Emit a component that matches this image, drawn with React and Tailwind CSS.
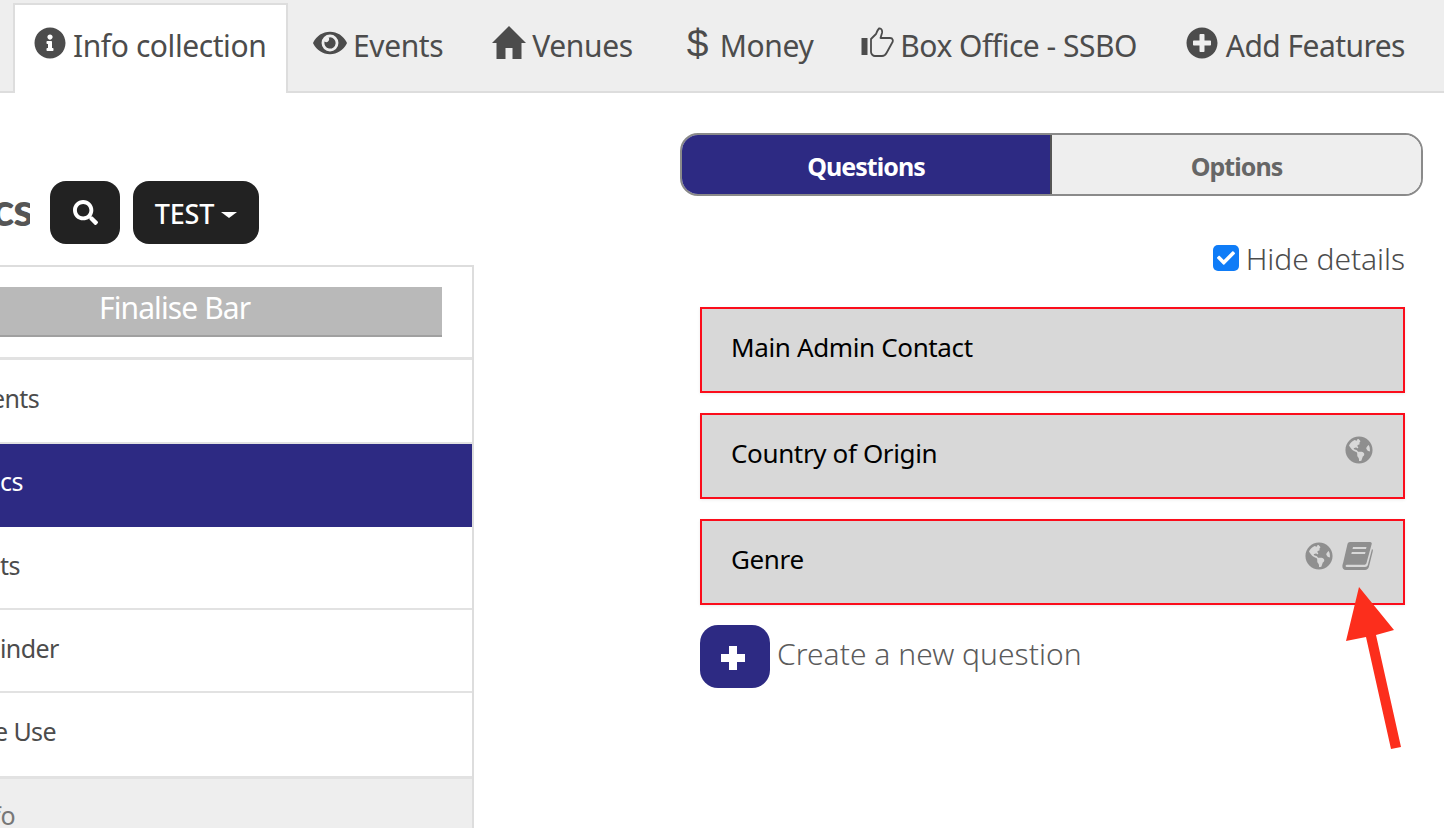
import React from "react";
import { FaInfoCircle, FaEye, FaPlusCircle, FaGlobeAmericas, FaSearch, FaCheck } from "react-icons/fa";

const font = { fontFamily: '"Noto Sans", sans-serif' };

function Tab({ icon, label, className = "" }) {
  return (
    <div className={`flex items-center h-full text-[#4c4c4c] text-[30px] whitespace-nowrap ${className}`}>
      {icon}
      <span className="mt-[2px]">{label}</span>
    </div>
  );
}

function HomeIcon() {
  return (
    <svg viewBox="0 0 34 34" className="w-[34px] h-[34px] mr-[6px] -mt-[4px]" fill="currentColor">
      <path d="M17 0 L34 17 L29.5 17 L29.5 33 L20.5 33 L20.5 22 L13.5 22 L13.5 33 L4.5 33 L4.5 17 L0 17 Z" />
    </svg>
  );
}

function ThumbIcon() {
  return (
    <svg viewBox="0 0 33 32" className="w-[33px] h-[32px] mr-[6px] -mt-[4px]">
      <rect x="0.5" y="11" width="6" height="17" fill="currentColor" />
      <path d="M10 12 L15 7 C16 4.5 16.5 3 18 1.5 C20.5 1 21.5 3.5 21 6 L19.5 11 L29 11 C32 11 32.5 14 31 16 L25.5 26 C24.5 28 23 29 21 29 L14 29 C12 29 10 27 10 25 Z" fill="none" stroke="currentColor" strokeWidth="1.8" strokeLinejoin="round" />
    </svg>
  );
}

function BookIcon() {
  return (
    <svg viewBox="0 0 31 28" className="w-[31px] h-[28px]" fill="#8f8f8f">
      <path fillRule="evenodd" d="M8 0 H28 C29.5 0 30 1 29.7 2 L24.5 21 C24.2 22 23.4 22.8 22 22.8 H5 C3.4 22.8 3 24.6 4.5 25 H23 C24.5 25 25.4 24 25.8 23 L30 7 C31 7.5 31 8.5 30.7 9.5 L27 24.5 C26.4 26.6 25 28 23 28 H4 C1.5 28 0 26 0.4 23.5 C0.6 22.5 0.8 21.5 1.2 20.5 L5.5 2 C5.8 0.8 6.8 0 8 0 Z M11 5 L10.5 7 H24 L24.5 5 Z M9.8 10 L9.3 12 H23 L23.5 10 Z" />
    </svg>
  );
}

function Row({ children, className = "", indent = "" }) {
  return (
    <div className={`flex items-center border-b-2 border-[#e2e2e2] text-[25px] tracking-[-0.6px] text-[#4c4c4c] whitespace-nowrap ${className}`}>
      <span className={indent}>{children}</span>
    </div>
  );
}

function Question({ label, icons }) {
  return (
    <div className="h-[86px] bg-[#d8d8d8] border-2 border-[#fb0d1b] flex items-center justify-between pl-[29px] pr-[30px] text-[26px] tracking-[-0.36px] text-black shadow-[0_1px_3px_rgba(0,0,0,0.08)]">
      <span className="-mt-[5px]">{label}</span>
      <span className="flex items-center gap-[9px] text-[#8f8f8f] -mt-[13px]">{icons}</span>
    </div>
  );
}

export default function App() {
  return (
    <div className="relative w-[1444px] h-[828px] overflow-hidden bg-white" style={font}>
      <div className="h-[93px] bg-[#eeeeee] border-b-2 border-[#dddddd] flex items-stretch">
        <div className="ml-[13px] mt-[3px] w-[275px] h-[90px] bg-white border-2 border-b-0 border-[#dddddd] flex items-center pl-[19px] pb-[8px] text-[#4c4c4c] text-[30px] tracking-[-0.42px] whitespace-nowrap">
          <FaInfoCircle className="w-[32px] h-[32px] mr-[7px] -mt-[4px] text-[#4c4c4c]" />
          <span className="mt-[1px]">Info collection</span>
        </div>
        <Tab className="ml-[25px] pb-[2px] tracking-[-0.38px]" label="Events" icon={<FaEye className="w-[34px] h-[30px] mr-[6px] -mt-[4px]" />} />
        <Tab className="ml-[49px] pb-[2px] tracking-[-0.38px]" label="Venues" icon={<HomeIcon />} />
        <Tab className="ml-[54px] pb-[2px] tracking-[-0.38px]" label="Money" icon={<span className="w-[24px] mr-[9px] -mt-[3px] text-[39px] leading-none" style={{ fontFamily: '"Liberation Sans", sans-serif' }}>$</span>} />
        <Tab className="ml-[48px] pb-[2px] tracking-[-0.5px]" label="Box Office - SSBO" icon={<ThumbIcon />} />
        <Tab className="ml-[49px] pb-[2px] tracking-[-0.55px]" label="Add Features" icon={<FaPlusCircle className="w-[32px] h-[32px] mr-[8px] -mt-[4px]" />} />
      </div>

      <div className="flex">
        <div className="w-[474px] shrink-0">
          <div className="h-[63px] mt-[88px] flex items-center">
            <span className="text-[46px] font-black text-[#555555] leading-none w-[30px] -mt-[8px] overflow-hidden tracking-[-1px] -indent-[8px]" style={{ fontFamily: '"Lato", sans-serif' }}>cs</span>
            <button className="ml-[20px] w-[70px] h-[63px] rounded-[16px] bg-[#222222] flex items-center justify-center text-white">
              <FaSearch className="w-[25px] h-[25px]" />
            </button>
            <button className="ml-[13px] w-[126px] h-[63px] rounded-[16px] bg-[#222222] flex items-center justify-center gap-[7px] text-white text-[27px] font-medium tracking-[-0.2px]">
              <span className="mt-[3px]">TEST</span>
              <span className="w-0 h-0 border-x-[8px] border-x-transparent border-t-[6px] border-t-white mt-[4px]" />
            </button>
          </div>

          <div className="mt-[21px] border-t-2 border-r-2 border-[#dddddd] h-[600px]">
            <div className="pt-[20px] pb-[20px] border-b-[3px] border-[#e2e2e2]">
              <div className="w-[442px] h-[50px] bg-[#b9b9b9] border-b-2 border-[#a0a0a0] flex items-center text-white text-[30px] tracking-[-0.9px] pl-[99px] pb-[7px] whitespace-nowrap">
                Finalise Bar
              </div>
            </div>
            <Row className="h-[84px] pb-[5px]" indent="-ml-[9px]">ents</Row>
            <div className="h-[83px] flex items-center bg-[#2d2a83] text-white text-[25px] tracking-[-0.6px] pb-[8px]">cs</div>
            <Row className="h-[83px] pb-[4px]">ts</Row>
            <Row className="h-[83px] pb-[4px]">inder</Row>
            <div className="h-[83px] flex items-center text-[25px] tracking-[-0.6px] text-[#4c4c4c] pb-[6px]"><span className="-ml-[6px]">e Use</span></div>
            <div className="h-[90px] border-t-[3px] border-[#e2e2e2] bg-[#eeeeee] text-[25px] text-[#777777] pt-[18px]"><span className="-ml-[8px] block">fo</span></div>
          </div>
        </div>

        <div className="flex-1 min-w-0">
          <div className="ml-[206px] mt-[40px] w-[743px] h-[63px] flex rounded-[18px] overflow-hidden border-2 border-[#8a8a8a] text-[25px] font-bold tracking-[-0.95px]">
            <div className="w-[370px] bg-[#2d2a83] text-white flex items-center justify-center border-r-2 border-[#555] pt-[4px]">Questions</div>
            <div className="flex-1 bg-[#eeeeee] text-[#666666] flex items-center justify-center pt-[4px]">Options</div>
          </div>

          <div className="mt-[43px] mr-[39px] flex items-center justify-end text-[#4c4c4c] font-light text-[30px] tracking-[-0.05px] h-[40px]">
            <span className="w-[26px] h-[26px] rounded-[5px] bg-[#0f7cf7] flex items-center justify-center mr-[7px] -mt-[2px]">
              <FaCheck className="w-[18px] h-[18px] text-white" />
            </span>
            <span className="-mt-[2px]">Hide details</span>
          </div>

          <div className="ml-[226px] mr-[39px] mt-[28px] flex flex-col gap-[20px]">
            <Question label="Main Admin Contact" />
            <Question label="Country of Origin" icons={<FaGlobeAmericas className="w-[28px] h-[28px]" />} />
            <Question label="Genre" icons={<><FaGlobeAmericas className="w-[28px] h-[28px]" /><BookIcon /></>} />
          </div>

          <div className="ml-[226px] mt-[20px] flex items-center">
            <span className="w-[70px] h-[63px] rounded-[18px] bg-[#2d2a83] flex items-center justify-center text-white">
              <svg viewBox="0 0 24 24" className="w-[24px] h-[24px] -ml-[4px] mt-[2px]" fill="currentColor">
                <path d="M8 0 H16 V8 H24 V16 H16 V24 H8 V16 H0 V8 H8 Z" />
              </svg>
            </span>
            <span className="ml-[7px] text-[#5b5b5b] font-light text-[30px] tracking-[0.03px] -mt-[6px]">Create a new question</span>
          </div>
        </div>
      </div>

      <svg className="absolute left-0 top-0 pointer-events-none" width="1444" height="828" viewBox="0 0 1444 828">
        <polygon fill="#fc2e1c" points="1359,587 1394,630 1376,635 1401,747 1391,749 1366,637 1346,641" />
      </svg>
    </div>
  );
}
